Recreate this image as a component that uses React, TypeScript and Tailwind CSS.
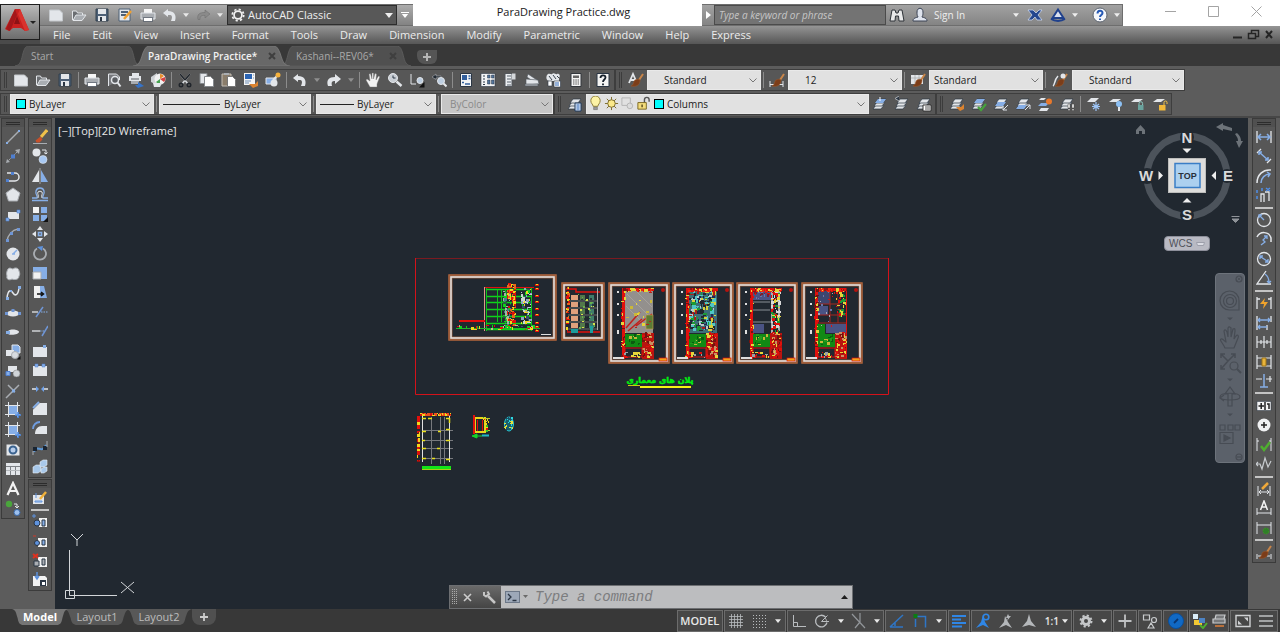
import type { ReactNode } from "react";

// Palette shared by the small toolbar drawings
const L = "#e3e6ea";
const G = "#a9adb2";
const B = "#86aee6";
const D = "#2b3644";
const O = "#dd8430";

const page = <path d="M1.500 3h10l3 3v8h-13z" fill={L} stroke="#c4c8cc" />;
const brush = (
  <g>
    <path d="m15 2-4 6" stroke="#c98548" strokeWidth="2" />
    <path d="M12 8c0 6-5 7-9 6 3-1 2-4 4-6 2-1 4-1 5 0z" fill="#7c3d19" stroke="#9a5526" strokeWidth=".6" />
  </g>
);
const stack = (
  <g fill={L} stroke={D} strokeWidth=".7">
    <path d="M4 9h8l-3 4H1z" />
    <path d="M5 6h8l-3 4H2z" />
    <path d="M6 3h8l-3 4H3z" />
  </g>
);
const dimBase = <path d="M2 5v10M14 5v10M3 11h10M5 9l-2 2 2 2M11 9l2 2-2 2" stroke={L} />;

const ICONS: Record<string, ReactNode> = {
  new: page,
  open: (
    <g stroke={L}>
      <path d="M1.500 13V4h4l1 2h5v2" fill="#6b6e72" />
      <path d="M2 13.500 5 8h10l-4 5.500z" fill={G} />
    </g>
  ),
  save: (
    <g>
      <path d="M2 2h12v12H2z" fill="#4d6077" stroke="#33404f" />
      <path d="M4 2h8v5H4zM4 9h8v5H4z" fill={L} />
      <path d="M6 10h2v4H6z" fill={D} />
    </g>
  ),
  saveas: (
    <g>
      <path d="M2 2h11v12H2z" fill={L} stroke="#4d6077" />
      <path d="M4 5h7M4 8h5" stroke="#4d6077" strokeWidth="2" />
      <path d="m7 12 7-8" stroke="#f0a030" strokeWidth="2.500" />
    </g>
  ),
  print: (
    <g>
      <path d="M4 2h8v5H4z" fill="#f6f6f6" />
      <path d="M1 6h14v6H1z" fill={G} stroke={L} />
      <path d="M3.500 10.500h9v4h-9z" fill="#fff" stroke={D} strokeWidth=".6" />
    </g>
  ),
  preview: (
    <g>
      <path d="M2.500 14V2h8l3 3v3" stroke={L} fill="#77797d" />
      <circle cx="9" cy="8" r="3.500" fill="#5a5d61" stroke={L} strokeWidth="1.500" />
      <path d="m11.500 10.500 3 4" stroke={L} strokeWidth="2" />
    </g>
  ),
  publish: (
    <g>
      <path d="M4 1h7v4H4zM1 4h12v5H1z" fill={L} />
      <path d="M3 9h8v3H3z" fill={G} />
      <path d="M3 7h8" stroke="#5c6064" />
      <path d="M7 13h3v-3l6 4-6 2z" fill="#3673c8" />
    </g>
  ),
  print3d: (
    <g>
      <path d="m1 5 6-4v12l-6-3z" fill="#d0d3d6" />
      <circle cx="10" cy="7" r="5.500" fill="#f2f2f2" />
      <path d="M10 7V2a5 5 0 0 1 4 2z" fill="#e88d2d" />
      <path d="m10 7 5-2a5 5 0 0 1-1 5z" fill="#d64343" />
      <path d="M10 7v5a5 5 0 0 1-4-2z" fill="#45a150" />
      <path d="M3 11h9l-2 4H4z" fill={L} />
    </g>
  ),
  cut: (
    <g stroke="#20252b" strokeWidth="1.600">
      <path d="m3 2 8 10M13 2 5 12" stroke="#d5d8db" />
      <path d="m3 2 5 6M13 2 8 8" />
      <circle cx="4" cy="13" r="1.700" />
      <circle cx="12" cy="13" r="1.700" />
    </g>
  ),
  copy: (
    <g fill={L} stroke="#85898d">
      <path d="M1 1.500h7v10H1z" />
      <path d="M5.500 4.500h6l3 3v7h-9z" fill="#fff" />
    </g>
  ),
  paste: (
    <g>
      <path d="M1 2h9v12H1z" fill="#8a7d6b" stroke="#c3bdb3" />
      <path d="M3 1h5v2H3z" fill={G} />
      <path d="M6.500 4.500h5l3 3v7h-8z" fill="#fff" stroke="#777" />
    </g>
  ),
  match: (
    <g>
      <path d="M1 1h11v12H1z" fill="#f4f4f4" />
      <path d="M2 2h7v5H2z" fill="#2c65b4" />
      <path d="M10 3h1M10 6h1M2 9h6M2 11h4" stroke="#6e8fb7" />
      <path d="M6 12h6l3-3v5l-5 2z" fill={O} />
    </g>
  ),
  blockedit: (
    <g>
      <path d="M1 6h10v6H1z" fill={B} stroke={L} />
      <circle cx="9" cy="11" r="3.500" fill={L} />
      <path d="m8 8 5-5" stroke={L} strokeWidth="2" />
      <circle cx="13" cy="3" r="2.500" fill="#f5b13c" />
    </g>
  ),
  undo: <path d="M6 2 1 6l5 4V8c4-.5 5 1 3 6h4c2-6-1-10-7-10z" fill={L} />,
  redo: <path d="m9 2 6 5-6 5V9c-3 0-4 1-3 5H2C0 8 3 5 9 5z" fill={L} />,
  redoDim: <path d="m10 3 5 4-5 4V8.500c-4-.5-5 1-5 4H3c-1-5 1-7 7-7z" fill="#8a8a8a" stroke="#6a6a6a" strokeWidth=".5" />,
  pan: <path d="M5 15 1 8l1-1 3 2-1-7 1.500-.3L7 7V1h1.500v6L10 1.500l1.500.5L11 8l2.500-4 1.300.7L12 12v3z" fill="#f3f3f3" stroke="#777" strokeWidth=".4" />,
  zoom: (
    <g>
      <circle cx="6" cy="6" r="4.500" fill="#c9ced4" stroke={L} />
      <path d="M6 3.500V6h2.500" stroke={D} />
      <path d="m9.500 9.500 5 4.500" stroke={L} strokeWidth="2.500" />
    </g>
  ),
  zoomwin: (
    <g>
      <path d="M2 2v10h5" stroke={L} />
      <circle cx="11" cy="8.500" r="3" fill="#bccde0" stroke={L} />
      <path d="M15.500 10v5.500H10z" fill="#111" />
    </g>
  ),
  zoomprev: (
    <g>
      <path d="M5 2 1 5l4 2.500V6c4-1 5 0 5 1V4H5z" fill="#222a33" stroke={G} strokeWidth=".6" />
      <circle cx="10" cy="9" r="3.500" fill="#bccde0" stroke={L} />
      <path d="m12.500 11.500 3 3" stroke={L} strokeWidth="2" />
    </g>
  ),
  props: (
    <g>
      <path d="M2.500 1.500h11v13h-11z" fill="#f2f4f6" stroke={D} />
      <path d="M4 3h5v5H4z" fill="#325f9d" />
      <path d="M10.500 4h2M10.500 6.500h2M4 10.500h2M7 12h5" stroke="#325f9d" strokeWidth="1.500" />
    </g>
  ),
  dc: (
    <g>
      <path d="M1 1.500h14v13H1z" fill="#f2f4f6" stroke={D} strokeWidth=".6" />
      <path d="M3 4h2M3 7h2M3 10h2M3 12.500h2" stroke={D} />
      <path d="M7.500 3h2.500v3H7.500zM11.500 3H14v3h-2.500zM7.500 8h2.500v4H7.500zM11.500 8H14v4h-2.500z" fill="#54779f" stroke={D} strokeWidth=".5" />
    </g>
  ),
  palettes: (
    <g>
      <path d="M3 1.500h7v13H3z" fill="#eceff2" stroke="#55595e" />
      <path d="M10 1.500h3.500v6H10z" fill="#d4d7da" />
      <path d="M5 4h4M5 7h4M5 10h4M5 13h4" stroke="#8a929b" strokeWidth="1.300" />
    </g>
  ),
  sheets: (
    <g fill={L} stroke="#4e545a" strokeWidth=".6">
      <path d="m4 2 9 6-2 3-8-6z" />
      <path d="m2 7 12 1 1 4-13 1z" />
      <path d="M1 12h13v2H1z" fill={G} />
    </g>
  ),
  markup: (
    <g>
      <path d="M1 3c2-3 4 0 5-1 2-2 4 1 5 0 2-1 4 2 2 4v3H3C0 8 0 5 1 3z" fill={L} />
      <path d="m3 4 3 4M7 3l3 4M11 4l2 2" stroke="#39424c" />
      <path d="M2 9h4v5H2zM8 9h6.500v6H8z" fill="#fff" stroke={D} strokeWidth=".6" />
      <path d="M9 11h4M9 13h4" stroke="#2c65b4" />
    </g>
  ),
  calc: (
    <g>
      <path d="M3 1.500h10v13H3z" fill="#f4f4f4" stroke="#33373c" />
      <path d="M5 3.500h6v2.500H5z" fill="#666" />
      <path d="M5 8h6M5 10h6M5 12h6" stroke="#555" strokeDasharray="1.500 .8" />
    </g>
  ),
  help: (
    <g>
      <path d="M2 1.500h12v13H2z" fill="#f4f4f4" stroke={D} />
      <path d="M5.500 6c0-3.500 5-3.500 5-.5C10.500 7.500 8 7.500 8 10M8 11.500v1.800" stroke="#16202c" strokeWidth="1.800" />
    </g>
  ),
  textstyle: (
    <g>
      <path d="M1 11 5 2l4 9M3 8h4.500" stroke={L} strokeWidth="1.800" />
      {brush}
    </g>
  ),
  dimstyle: (
    <g>
      <path d="M1 9v6M14 9v6M1 12.500h13" stroke={L} />
      {brush}
    </g>
  ),
  tablestyle: (
    <g>
      <path d="M1 3h12v9H1z" fill={L} />
      <path d="M1 6h12M5 3v9M9 3v9" stroke="#a0a4a8" strokeWidth=".7" />
      {brush}
    </g>
  ),
  mlstyle: (
    <g>
      <path d="M1 14c2-1 1-6 5-10" stroke={L} strokeWidth="1.500" />
      {brush}
      <circle cx="11" cy="4" r="2.500" fill={L} />
    </g>
  ),
  layers: (
    <g>
      {stack}
      <path d="M8 7h6v8H8z" fill="#d9e6f7" stroke="#1e3a5f" />
      <path d="M9.500 9h3M9.500 11h3M9.500 13h3" stroke="#2c65b4" />
    </g>
  ),
  bulb: (
    <g>
      <path d="M5.500 11c0-2-2.500-3-2.500-6a5 5 0 0 1 10 0c0 3-2.500 4-2.500 6z" fill="#fdf3a6" stroke="#8a7a33" />
      <path d="M6 12h4v2.500H6z" fill="#9a9a9a" stroke="#555" strokeWidth=".5" />
    </g>
  ),
  sun: (
    <g stroke="#7a6a2a">
      <path d="M8 1v14M1 8h14M3 3l10 10M13 3 3 13" />
      <circle cx="8" cy="8" r="4" fill="#fbe98a" />
    </g>
  ),
  vpfreeze: (
    <g stroke="#b3b3b3">
      <path d="M2 2h9v8H2z" />
      <circle cx="10.500" cy="10.500" r="3" fill="#dcdcdc" />
    </g>
  ),
  unlock: (
    <g>
      <path d="M9 7V4a2.500 2.500 0 0 1 5 0v2" stroke="#555" strokeWidth="1.500" />
      <path d="M2 7h9v7H2z" fill="#f3dc7c" stroke="#7b6620" />
      <path d="M6.500 9v3" stroke="#55471a" strokeWidth="1.500" />
    </g>
  ),
  layCur: (
    <g>
      {stack}
      <path d="M6 3h8l-3 4H3z" fill={B} />
      <path d="M8 1v4" stroke="#fff" />
    </g>
  ),
  layPrev: (
    <g>
      {stack}
      <path d="M5 0 1 2.500 5 5" fill={D} stroke={G} />
    </g>
  ),
  layState: (
    <g>
      {stack}
      <path d="M7 9h8v6H7z" fill="#fff" stroke="#333" />
      <path d="M9 11h5M9 13h5" stroke="#555" />
    </g>
  ),
  layMatch: (
    <g>
      {stack}
      <path d="M7 11h5l3-3v5l-4 2z" fill={O} />
    </g>
  ),
  layCheck: (
    <g>
      {stack}
      <path d="M6 3h8l-3 4H3z" fill={B} />
      <path d="m7 11 3 3 5-6" stroke="#45a13c" strokeWidth="2.200" />
    </g>
  ),
  layIn: (
    <g>
      {stack}
      <path d="M5 6h8l-3 4H2z" fill={B} />
      <path d="m15 9-5 5m0-4v4h4" stroke="#dfe4ea" />
    </g>
  ),
  layOut: (
    <g>
      {stack}
      <path d="M4 9h8l-3 4H1z" fill={B} />
      <path d="m10 14 5-5m-4 0h4v4" stroke="#dfe4ea" />
    </g>
  ),
  layIso: (
    <g>
      <path d="M4 2h5L7 4H2zM4 12h8l-2 3H2z" fill={L} />
      <path d="M4 7h8l-3 3H1z" fill={B} />
      <circle cx="12" cy="5.500" r="3" fill="#e8782c" />
    </g>
  ),
  layWalk: (
    <g>
      {stack}
      <path d="M9 8h2v4H9zM13 8h2v4h-2zM9 13h2v1.500H9zM13 13h2v1.500h-2z" fill="#fff" stroke="#444" strokeWidth=".5" />
    </g>
  ),
  layFrz: (
    <g>
      <path d="M5 2h8l-4 4H1z" fill={L} />
      <path d="M10 6v9M6 10.500h8M7 8l6 5M13 8l-6 5" stroke="#9cc4f5" strokeWidth="1.200" />
    </g>
  ),
  layOff: (
    <g>
      <path d="M5 3h8l-4 3H1z" fill={L} />
      <circle cx="11" cy="8" r="3" fill="#8cc0f4" />
      <path d="M11 11v4" stroke={L} strokeWidth="2" />
    </g>
  ),
  layLock: (
    <g>
      <path d="M5 3h8l-4 3H1z" fill={L} />
      <path d="M9 9V7.500a1.800 1.800 0 0 1 3.600 0V9" stroke="#8fc7c0" />
      <path d="M8 9h5.500v5H8z" fill="#6aa39e" />
    </g>
  ),
  layUnlock: (
    <g>
      <path d="M5 3h8l-4 3H1z" fill={L} />
      <path d="M12 9V6.500a1.500 1.500 0 0 1 3 0V8" stroke="#f0c24a" />
      <path d="M7 9h6.500v5.500H7z" fill="#f0b83a" />
    </g>
  ),

  // Draw toolbar
  line: (
    <g>
      <path d="M2 14 14 2" stroke={G} strokeWidth="1.500" />
      <path d="M1 13h2v2H1zM13 1h2v2h-2z" fill={B} />
    </g>
  ),
  xline: (
    <g>
      <path d="m2 14 12-12" stroke={G} strokeDasharray="2 1" />
      <path d="m15 1-1 5-4-4zM1 15l1-4 3 3z" fill={G} />
      <path d="M6 6.500h4v4H6z" fill="#4f7fd0" />
    </g>
  ),
  pline: (
    <g>
      <path d="M2 5h8a4 4 0 0 1 0 8H3" stroke={L} strokeWidth="1.500" />
      <path d="M1 11h3v3H1zM6 4h3v3H6z" fill="#4f7fd0" />
    </g>
  ),
  polygon: <path d="m8 1 7 5-2.500 8h-9L1 6z" fill={L} stroke={G} />,
  rect: (
    <g>
      <path d="M3 5h11v7H3z" fill={L} />
      <path d="M1 11h3v3H1zM12 3h3v3h-3z" fill={B} stroke="#4f7fd0" strokeWidth=".6" />
    </g>
  ),
  arc: (
    <g>
      <path d="M2 14C3 8 7 3 13 2" stroke={G} strokeWidth="1.500" />
      <path d="M1 12h3v3H1zM5 5h3v3H5zM12 1h3v3h-3z" fill="#6f95d4" />
    </g>
  ),
  circle: (
    <g>
      <circle cx="8" cy="8" r="6.500" fill={L} />
      <path d="m8 8 4-4M7 8h3" stroke={B} strokeWidth="1.500" />
    </g>
  ),
  cloud: <path d="M3 3c2-2 4 0 5 0 2-2 6-1 6 2 1 2 1 4 0 5 0 4-5 4-7 3-3 2-6 0-5-3-1-3 0-5 1-7z" fill={L} stroke={G} />,
  spline: (
    <g>
      <path d="M2 13c1-9 4-8 6-5s5 3 6-5" stroke={L} strokeWidth="1.500" />
      <path d="M1 12h3v3H1zM13 1h3v3h-3zM5 5h2v2H5z" fill={B} />
    </g>
  ),
  ellipse: (
    <g>
      <ellipse cx="8" cy="8.500" rx="6.500" ry="3" fill={L} />
      <path d="M0 7h3v3H0zM13 7h3v3h-3zM6.500 4h3v3h-3z" fill="#6f95d4" />
    </g>
  ),
  ellarc: (
    <g>
      <path d="M3 7c4-3 11-1 11 1s-7 4-11 2z" fill={L} />
      <path d="M1 7h4v3H1z" fill={B} />
    </g>
  ),
  insert: (
    <g>
      <path d="M7 1h6l2 2v6H7z" fill={B} stroke={L} />
      <path d="M1 6h8v6H1z" fill={L} />
      <circle cx="10" cy="11" r="3.500" fill="#d7dbe0" stroke={G} />
      <path d="M15.500 12v3.500H12z" fill="#111" />
    </g>
  ),
  block: (
    <g>
      <path d="M3 3h9v6H3z" fill={L} />
      <circle cx="11.500" cy="10.500" r="3.500" fill="#cfd3d7" stroke="#777" strokeWidth=".5" />
      <path d="M1 8.500h4v4H1z" fill={B} stroke="#4f7fd0" />
    </g>
  ),
  point: (
    <g>
      <path d="M1 15 14 2M3 2l7 7" stroke={G} strokeWidth="1.500" />
      <path d="M7 6.500h3v3H7z" fill={B} />
    </g>
  ),
  hatch: (
    <g>
      <path d="M4 4h8v8H4z" fill={B} />
      <path d="M3.500 0v15M12.500 0v15M0 3.500h15M0 12.500h15" stroke={L} />
      <path d="M13 10v6M10 13h6" stroke="#4f8ee8" strokeWidth="1.500" />
    </g>
  ),
  region: (
    <g>
      <path d="M1.500 2.500h10l3 3v8h-13z" fill={L} />
      <circle cx="8" cy="8" r="3.500" fill="#b7cdeb" stroke="#3a628f" strokeWidth="2" />
    </g>
  ),
  table: (
    <g>
      <path d="M1 2h14v12H1z" fill={L} />
      <path d="M1 5.500h14M5.500 5v9M10.500 5v9" stroke="#7d8186" />
      <path d="M1 9.500h14" stroke="#b4b8bc" />
    </g>
  ),
  mtext: <path d="M2.500 14 8 2l5.500 12M4.500 10h7" stroke="#f3f3f3" strokeWidth="2.200" />,
  addsel: (
    <g>
      <circle cx="4" cy="4" r="3.200" fill="#4aa53c" />
      <path d="M9 4h3v4m-2-2 2 2 2-2" stroke={L} />
      <circle cx="12" cy="12.500" r="3" fill="#9cc0ee" stroke="#3968a8" />
    </g>
  ),

  // Modify toolbar
  erase: (
    <g>
      <path d="m15 1-6 7" stroke="#f0c14a" strokeWidth="3" />
      <path d="m8.500 7.500-5 4 1 2 3 0 3-3z" fill="#c7502a" />
      <path d="M1 14.500h14" stroke={G} />
    </g>
  ),
  copyobj: (
    <g>
      <circle cx="4.500" cy="4.500" r="4" fill={L} />
      <circle cx="11" cy="11.500" r="4" fill="#a8c8f2" stroke={L} strokeWidth=".6" />
      <path d="M10 2h4v4m-2-1.500 2 1.500 1.500-1.500" stroke={L} />
    </g>
  ),
  mirror: (
    <g>
      <path d="M7 2v12H0z" fill={L} />
      <path d="M9 2v12h7z" fill={B} />
      <path d="M8 0v16" stroke="#d4d7da" strokeWidth=".6" />
    </g>
  ),
  offset: (
    <g>
      <path d="M0 13.500h16M0 11h5c1-3-2-3-1-7 1-4 7-4 8 0 1 4-2 4-1 7h5" stroke={B} strokeWidth="1.300" />
      <path d="M6 11c1-3-1-4 0-6 1-1 3-1 4 0 1 2-1 3 0 6" stroke={L} />
    </g>
  ),
  array: (
    <g>
      <path d="M1 1h6v6H1z" fill="#f3f3f3" />
      <path d="M9 1h6v6H9zM1 9h6v6H1zM9 9h6v6H9z" fill={B} />
      <path d="M16 11v5h-5z" fill="#111" />
    </g>
  ),
  move: (
    <g>
      <path d="m8 0 3 4H5zM8 16l3-4H5zM0 8l4-3v6zM16 8l-4-3v6z" fill={L} />
      <path d="M6.500 6.500h3v3h-3z" stroke={B} strokeWidth="1.500" />
    </g>
  ),
  rotate: (
    <g>
      <path d="M5 3.500a6 6 0 1 0 6 0" stroke={G} strokeWidth="1.800" />
      <path d="m5 2 6-1-1 5z" fill="#5e92dd" />
    </g>
  ),
  scale: (
    <g>
      <path d="M1 2h14v12H1z" fill={B} />
      <path d="M1 7h8v7H1z" fill="#f1f1f1" stroke={G} />
    </g>
  ),
  stretch: (
    <g>
      <path d="M2 2h6v12H2z" fill="#f1f1f1" />
      <path d="M8 2h4l3 12H8z" fill={B} />
      <path d="M5 10h6M9 8l2.500 2L9 12" stroke="#111" strokeWidth="1.500" />
    </g>
  ),
  trim: (
    <g>
      <path d="M0 8h6" stroke={L} strokeWidth="1.300" />
      <path d="M9 8h7" stroke={B} strokeDasharray="1.500 1" />
      <path d="m4 13 7-10" stroke="#6f95d4" strokeWidth="1.500" />
    </g>
  ),
  extend: (
    <g>
      <path d="M0 8h8" stroke={L} strokeWidth="1.300" />
      <path d="M8 8h4" stroke={B} strokeDasharray="1.500 1" />
      <path d="m10 13 6-10" stroke="#6f95d4" strokeWidth="1.500" />
    </g>
  ),
  breakpt: (
    <g>
      <path d="M1 4h14v10H1z" fill={L} />
      <path d="M11 2h3v3h-3z" fill={B} />
    </g>
  ),
  breakobj: (
    <g>
      <path d="M1 4h14v10H1z" fill={L} />
      <path d="M3 2h3v3H3zM10 2h3v3h-3z" fill={B} stroke="#4f7fd0" strokeWidth=".5" />
    </g>
  ),
  join: (
    <g>
      <path d="M0 8h6M10 8h6" stroke={L} strokeWidth="1.300" />
      <path d="m4 5 3 3-3 3zM12 5 9 8l3 3z" fill="#6fa1ea" />
    </g>
  ),
  chamfer: (
    <g>
      <path d="m1 14V9l7-7h7v12z" fill={L} />
      <path d="M1 14V9l7-7h7v12z" fill={L} />
      <path d="m1 7 6-6" stroke={B} strokeWidth="2" />
    </g>
  ),
  fillet: (
    <g>
      <path d="M3 14c0-5 3-8 7-8h5v8z" fill={L} />
      <path d="M1 9c0-4 3-7 7-7" stroke="#6f9ce0" strokeWidth="1.800" />
    </g>
  ),
  blend: (
    <g>
      <path d="M2 12c3-9 7 3 12-7" stroke="#5c97d6" strokeWidth="2" />
      <path d="M1 7h4v4H1zM11 6h4v4h-4z" fill="#1a2431" />
      <path d="M15 1v6M1 11v4" stroke={G} />
    </g>
  ),
  explode: (
    <g fill="#a8c8ea" stroke="#e9eef3" strokeWidth=".6">
      <path d="m1 8 3-2h5v6l-3 2H1z" />
      <path d="m8 3 3-2h4v5l-3 2H8z" />
      <path d="m9 10 3-2h3v4l-3 2H9z" />
    </g>
  ),
  refedit: (
    <g>
      <path d="M1 5h11v9H1z" fill={L} />
      <path d="M3 11h7v1H3zM4 3v5" stroke="#5e92dd" />
      <path d="m8 9 6-7" stroke="#f0b13a" strokeWidth="2.500" />
    </g>
  ),
  refadd: (
    <g>
      <path d="M7 4h8v9H7z" fill="#f3f3f3" />
      <circle cx="5" cy="9" r="3" fill="#5e92dd" stroke={D} />
      <path d="M10 6h3v6h-3z" fill={B} stroke={D} />
      <path d="M2 0v4M0 2h4" stroke="#5e92dd" />
    </g>
  ),
  refrem: (
    <g>
      <path d="M6 4h9v9H6z" fill="#f3f3f3" />
      <circle cx="5" cy="9" r="2.500" fill="#5e92dd" stroke={D} />
      <path d="M10 6h3v5h-3z" fill={B} stroke={D} />
      <path d="M1 2h3" stroke="#d23a2b" />
    </g>
  ),
  refclose: (
    <g>
      <path d="M6 4h9v10H6z" fill="#f3f3f3" />
      <path d="M2 8h5v5H2z" fill={G} stroke={D} />
      <path d="M10 6h3v6h-3z" fill={G} stroke={D} />
      <path d="m1 1 5 4M6 1 1 5" stroke="#e0301e" strokeWidth="2" />
    </g>
  ),
  refsave: (
    <g>
      <path d="M1 4h12l2 2v8H1z" fill="#f3f3f3" />
      <path d="M8 8h6v6H8z" fill={D} />
      <path d="M10 10h3v3h-3z" fill="#fff" />
      <path d="M5 0v6M3 4l2 3 2-3" stroke="#5e92dd" strokeWidth="1.500" />
    </g>
  ),

  // Dimension toolbar
  dlin: (
    <g>
      <path d="M1 2v12M15 2v12" stroke={L} strokeWidth="1.300" />
      <path d="M2 8h12M5 5 2 8l3 3M11 5l3 3-3 3" stroke={B} strokeWidth="1.500" />
    </g>
  ),
  dali: (
    <g>
      <path d="M1 5l4-4M11 15l4-4" stroke={L} strokeWidth="1.300" />
      <path d="m3 4 9 8M3 7V4h3M12 9v3H9" stroke={B} strokeWidth="1.500" />
    </g>
  ),
  darc: (
    <g>
      <path d="M1 15C1 7 7 1 15 2" stroke={L} strokeWidth="1.500" />
      <path d="M5 15c0-5 4-9 9-9M11 4l3 2-2 3" stroke={B} strokeWidth="1.500" />
    </g>
  ),
  dord: (
    <g>
      <path d="M5 15V7h3v8M9 5h4v9" stroke={L} strokeWidth="1.300" />
      <path d="M1 3v3M1 9v3M6 1v3M10 4l4-3M10 1l4 3" stroke="#4f8ee8" strokeWidth="1.500" />
    </g>
  ),
  drad: (
    <g>
      <circle cx="8" cy="8" r="6.500" stroke={L} strokeWidth="1.300" />
      <path d="m8 8-5-5M3 6V3h3" stroke={B} strokeWidth="1.300" />
    </g>
  ),
  djog: (
    <g>
      <path d="M1 6c3-6 12-6 14 1v4" stroke={L} strokeWidth="1.500" />
      <path d="m5 14 4-3-2-2 4-4M8 5h3v3" stroke={B} strokeWidth="1.300" />
    </g>
  ),
  ddia: (
    <g>
      <circle cx="8" cy="8" r="6.500" stroke={L} strokeWidth="1.300" />
      <path d="m3.500 5 9 6M4 8V5h3M12 8v3H9" stroke={B} strokeWidth="1.300" />
    </g>
  ),
  dang: (
    <g>
      <path d="M10 1 1 14h14" stroke={L} strokeWidth="1.300" />
      <path d="M9 4c3 2 4 5 4 9M11 11l2 2 2-2" stroke={B} strokeWidth="1.300" />
    </g>
  ),
  dquick: (
    <g>
      <path d="M1 2v12M15 2v12M1 4h3M12 4h3" stroke={L} strokeWidth="1.300" />
      <path d="M9 3 4 9h4l-1 5 5-7H8z" fill="#f0a32c" />
    </g>
  ),
  dbase: (
    <g>
      <path d="M1 1v14M11 10v5M15 1v6" stroke={L} strokeWidth="1.300" />
      <path d="M2 5h12M2 12h9M4 3 2 5l2 2M12 3l2 2-2 2M4 10l-2 2 2 2" stroke={B} strokeWidth="1.300" />
    </g>
  ),
  dcont: <path d="M1 2v12M8 2v12M15 2v12M1 8h14M5 6v4M11 6v4" stroke={L} strokeWidth="1.200" />,
  dspace: (
    <g>
      <path d="M1 1v14M15 1v14M1 4h14M1 12h14" stroke={L} strokeWidth="1.200" />
      <path d="M6 4h4v8H6z" fill="#e9b43a" stroke="#9b7218" />
    </g>
  ),
  dbreak: (
    <g>
      <path d="M0 6h6M10 6h6M14 3v6" stroke={L} strokeWidth="1.200" />
      <path d="M8 1v13M4 14h8" stroke={B} strokeWidth="1.500" />
    </g>
  ),
  dtol: (
    <g>
      <path d="M1 3.500h14v9H1z" fill="#f4f4f4" stroke={D} strokeWidth=".5" />
      <path d="M9 4v8M2.500 8H8M5.200 5v6M11 6h2v5" stroke="#222" strokeWidth="1.500" />
    </g>
  ),
  dcenter: (
    <g>
      <circle cx="8" cy="8" r="6.500" fill="#f0f1f2" />
      <path d="M8 5v6M5 8h6" stroke="#222" strokeWidth="1.500" />
    </g>
  ),
  dinsp: (
    <g>
      <path d="M1 1v13M15 1v13M1 4h2M13 4h2" stroke={L} />
      <path d="m5 9 3 4 6-8" stroke="#4fae2f" strokeWidth="2.500" />
    </g>
  ),
  djogl: <path d="M0 8h4l2 5L9 2l3 9 3-6M2 6 0 8l2 2" stroke="#c8ccd0" strokeWidth="1.200" />,
  dedit: (
    <g>
      {dimBase}
      <path d="m6 8 6-6" stroke="#f0a93a" strokeWidth="2.500" />
    </g>
  ),
  dtedit: (
    <g>
      <path d="M1 8v7M15 8v7M1 13h14" stroke={L} />
      <path d="m4.500 10 3.500-9 3.500 9M6 7h4" stroke="#f4f4f4" strokeWidth="1.500" />
    </g>
  ),
  dupd: (
    <g>
      <path d="M1 2v12M15 2v12M1 5h14" stroke={L} />
      <circle cx="10" cy="11" r="3" fill="#2f7f28" stroke="#3f8f28" strokeDasharray="2 1" />
    </g>
  ),
  dstyle: (
    <g>
      <path d="M1 10v5M15 10v5M2 12h4M11 12h3" stroke={L} />
      {brush}
    </g>
  ),

  // Status bar
  grid: <path d="M3.500 1v14M6.500 1v14M9.500 1v14M12.500 1v14M1 3.500h14M1 6.500h14M1 9.500h14M1 12.500h14" stroke="#b9bcbf" strokeWidth=".8" />,
  snap: <path d="M2 2.500h13M2 5.500h13M2 8.500h13M2 11.500h13M2 14.500h13" stroke="#b9bcbf" strokeDasharray="1 2" />,
  ortho: <path d="M2.500 2v11.500H15M2.500 9.500h4v4" stroke="#b9bcbf" />,
  polar: (
    <g stroke="#b9bcbf">
      <path d="M11.500 4A5.800 5.800 0 1 0 13 9.500" strokeWidth="1.300" />
      <path d="M7.500 8.500H15M7.500 8.500l6-6M11 5c1 1 1.500 2 1.500 3.500" />
    </g>
  ),
  iso: <path d="m1 1 13 14M9 0v9M9 9l-5 6" stroke="#92969a" strokeWidth="1.200" />,
  otrack: <path d="M1 14 14 2M1 14h13M6 9v4" stroke="#2f76c6" strokeWidth="1.500" />,
  osnap: (
    <g>
      <path d="M3.500 3.500h10v11M3.500 6v8" stroke="#2f76c6" strokeWidth="1.500" />
      <path d="M1.500 1h4v4h-4z" fill="#0b7d12" />
    </g>
  ),
  lwt: <path d="M1 3h14M1 6.500h9M1 10h14M1 13.500h10" stroke="#2f86e6" strokeWidth="2.200" />,
  annoOn: (
    <g>
      <path d="M8 2 6 9l-5 6 7-3 6 3-4-6z" fill="#2f86e6" />
      <circle cx="11" cy="4" r="2.800" stroke="#2f86e6" strokeWidth="1.600" />
    </g>
  ),
  annoAuto: (
    <g fill="#b4b7ba">
      <path d="M7 3 6 9l-5 6 7-3 6 3-4-6z" />
      <path d="m10 1-2 4h2l-1 3 4-5h-2z" />
    </g>
  ),
  anno: <path d="M8 1 6 8l-5 6 7-2 7 2-5-6z" fill="#b4b7ba" />,
  gear: (
    <g>
      <circle cx="8" cy="8" r="3.500" stroke="#c4c6c8" strokeWidth="3" />
      <circle cx="8" cy="8" r="5.500" stroke="#c4c6c8" strokeWidth="2" strokeDasharray="2.200 2.120" />
    </g>
  ),
  gearLine: (
    <g>
      <circle cx="8" cy="8" r="4.500" stroke="#f0f0f0" strokeWidth="2" />
      <circle cx="8" cy="8" r="6.500" stroke="#f0f0f0" strokeWidth="2" strokeDasharray="2.500 2.600" />
    </g>
  ),
  plus: <path d="M8 1.500v13M1.500 8h13" stroke="#bfc1c3" strokeWidth="1.800" />,
  isolate: (
    <g stroke="#c9ccce" strokeWidth="1.200">
      <path d="M1.500 2h6v5h-6zM6 15l3-5 3 5z" />
      <circle cx="12" cy="7" r="2.500" />
    </g>
  ),
  hw: (
    <g>
      <circle cx="8" cy="8" r="7.500" fill="#1169c4" stroke="#0b4f9b" />
      <path d="m6 10 4-4" stroke="#0a3670" strokeWidth="1.800" />
    </g>
  ),
  trust: (
    <g>
      <path d="M1 1h5v5H1z" fill="#d9ecf7" />
      <path d="M2 7h8v5H2z" fill="#f3c934" />
      <path d="M7 5h6v5H7z" fill="#4d83c4" />
      <path d="m8 12 3 3 4-5" stroke="#4fae2f" strokeWidth="2" />
    </g>
  ),
  plotter: (
    <g>
      <path d="M5 2h9l-1 4H4zM2 6h12v4H2z" fill="#77797b" stroke="#c9cbcd" strokeWidth="1.200" />
      <path d="M4 13h9" stroke="#b8703b" strokeWidth="2" />
    </g>
  ),
  clean: (
    <g>
      <path d="M1 2.500h14v11H1z" stroke="#d0d2d4" strokeWidth="1.400" />
      <path d="M9 4.500h4v4zM3 11.500v-4l4 4z" fill="#d0d2d4" />
    </g>
  ),
  menu: <path d="M1 3h14M1 8h14M1 13h14" stroke="#c0c2c4" strokeWidth="1.600" />,

  // Info centre
  binoc: <path d="M3 3h3l1 3h2l1-3h3l2 11h-5l-.5-5h-3L6 14H1z" fill="#e9e9e9" stroke="#2e3338" />,
  user: <path d="M5 5c0-5 6-5 6 0s-1 4-1 5c4 1 5 2 5 4H1c0-2 1-3 5-4 0-1-1 0-1-5z" fill="#dfe4ee" stroke="#3a4254" />,
  exchange: <path d="M1 3h5l3 3 3-3h3l-4 5 4 5h-5l-2-3-3 3H1l4-5z" fill="#24478f" stroke="#c9d6ee" strokeWidth=".8" />,
  a360: (
    <g stroke="#20418c">
      <path d="M8 2.500 2.500 11h11z" strokeWidth="2" fill="#d9e0ef" />
      <path d="M1 12c4 2.500 10 2.500 14 0" strokeWidth="2" />
    </g>
  ),
  helpRound: (
    <g>
      <circle cx="8" cy="8" r="7" fill="#f5f7fb" stroke="#5d6570" />
      <path d="M5.500 6.500c0-3.500 5-3.500 5-.5C10.500 8 8 8 8 10M8 11.500v1.500" stroke="#2458b5" strokeWidth="2" />
    </g>
  ),
};

function Icon({ name, className = "h-4 w-4" }: { name: string; className?: string }) {
  return (
    <svg viewBox="0 0 16 16" fill="none" className={`shrink-0 ${className}`} aria-hidden="true">
      {ICONS[name]}
    </svg>
  );
}

function Tool({ name, className = "h-5 w-[22px]" }: { name: string; className?: string }) {
  return (
    <button type="button" aria-label={name} className={`flex shrink-0 items-center justify-center ${className}`}>
      <Icon name={name} />
    </button>
  );
}

function Caret({ className = "w-3" }: { className?: string }) {
  return (
    <button type="button" aria-label="More" className={`flex h-4 shrink-0 items-center justify-center ${className}`}>
      <svg viewBox="0 0 8 5" className="h-1 w-1.5 fill-current" aria-hidden="true">
        <path d="M0 0h8L4 5z" />
      </svg>
    </button>
  );
}

const Sep = () => (
  <div className="flex w-[5px] shrink-0 justify-center">
    <div className="h-4 w-px bg-[#8c8c8c]" />
  </div>
);

const Grip = () => (
  <div className="flex h-5 w-[9px] shrink-0 items-center justify-center gap-px">
    <div className="h-4 w-px bg-[#3c3c3c]" />
    <div className="h-4 w-px bg-[#3c3c3c]" />
  </div>
);

const VGrip = () => (
  <div className="flex h-2 shrink-0 flex-col items-center justify-center gap-px bg-[#505050]">
    <div className="h-px w-3.5 bg-[#2c2c2c]" />
    <div className="h-px w-3.5 bg-[#2c2c2c]" />
  </div>
);

function Combo({
  label,
  value,
  className,
  disabled = false,
  children,
}: {
  label: string;
  value: string;
  className: string;
  disabled?: boolean;
  children?: ReactNode;
}) {
  return (
    <div className={`relative h-5 shrink-0 ${disabled ? "text-[#8a8a8a]" : "text-[#1c1c1c]"}`}>
      {children}
      <select
        aria-label={label}
        disabled={disabled}
        className={`block h-5 appearance-none border border-[#e9e9e9] text-[10px] leading-4 outline-none ${
          disabled ? "bg-[#c6c6c6]" : "bg-[#e1e1e1]"
        } ${className}`}
      >
        <option>{value}</option>
      </select>
      <svg viewBox="0 0 8 5" className="pointer-events-none absolute top-2 right-1 h-[5px] w-2" fill="none" stroke="#777" aria-hidden="true">
        <path d="m.5.5 3.500 3.500L7.500.5" />
      </svg>
    </div>
  );
}

const MENUS = ["File", "Edit", "View", "Insert", "Format", "Tools", "Draw", "Dimension", "Modify", "Parametric", "Window", "Help", "Express"];

function TitleBar() {
  return (
    <header className="flex bg-white pt-1">
      <div className="w-10 shrink-0 bg-[#4a4a4a]">
        <button
          type="button"
          aria-label="Application menu"
          className="flex h-9 w-10 items-center justify-center border border-[#1d1d1d] bg-linear-to-b from-[#b9b9b9] to-[#6d6d6d]"
        >
          <svg viewBox="0 0 36 34" className="h-[34px] w-9" aria-hidden="true">
            <path d="M13 4h5l9 21-4 1-4-3h-8l-4 3-4-2z" fill="#c8201f" />
            <path d="m13 4 2 6-7 16-4-2z" fill="#a3171a" />
            <path d="m15 11 3 8h-6z" fill="#8c1215" />
            <path d="m18 4 9 21-4 1-7-17z" fill="#d9332e" />
            <path d="M28 16h6l-3 3z" fill="#222" />
          </svg>
        </button>
      </div>
      <div className="flex min-w-0 flex-1 flex-col">
        <div className="flex h-[22px] items-stretch text-[11px]">
          <div className="flex items-center border-y border-[#6e6e6e] bg-linear-to-b from-[#acacac] to-[#838383] pl-1 text-[#e8e8e8]">
            {["new", "open", "save", "saveas", "print"].map((n) => (
              <Tool key={n} name={n} className="h-5 w-[23px]" />
            ))}
            <Tool name="undo" />
            <Caret className="w-2.5" />
            <Tool name="redoDim" className="h-5 w-6" />
            <Caret className="w-2.5" />
            <div className="relative ml-0.5 text-[#eeeeee]">
              <Icon name="gearLine" className="pointer-events-none absolute top-[3px] left-1 h-3.5 w-3.5" />
              <select aria-label="Workspace" className="block h-5 w-[170px] appearance-none border border-[#2d2d2d] bg-[#585858] pl-5 text-[11px] outline-none">
                <option>AutoCAD Classic</option>
              </select>
              <svg viewBox="0 0 8 5" className="pointer-events-none absolute top-2 right-1 h-[5px] w-2 fill-current" aria-hidden="true">
                <path d="M0 0h8L4 5z" />
              </svg>
            </div>
            <button type="button" aria-label="Customize" className="flex h-5 w-4 flex-col items-center justify-center gap-px">
              <span className="h-px w-2 bg-white" />
              <svg viewBox="0 0 8 5" className="h-1 w-2 fill-white" aria-hidden="true">
                <path d="M0 0h8L4 5z" />
              </svg>
            </button>
          </div>
          <h1 className="flex-1 truncate pl-3 text-center leading-4 text-[#1a1a1a]">ParaDrawing Practice.dwg</h1>
          <div className="flex items-center border-y border-r border-[#6e6e6e] bg-linear-to-b from-[#a2a2a2] to-[#848484] text-[#eeeeee]">
            <button type="button" aria-label="Collapse search" className="flex h-5 w-3 items-center justify-center">
              <svg viewBox="0 0 5 8" className="h-2 w-[5px] fill-white" aria-hidden="true">
                <path d="M0 0v8l5-4z" />
              </svg>
            </button>
            <input
              aria-label="Search"
              placeholder="Type a keyword or phrase"
              className="h-5 w-[172px] border border-[#4b4b4b] bg-[#737373] px-1 text-[10px] italic outline-none placeholder:text-[#c6c6c6]"
            />
            <Tool name="binoc" />
            <Tool name="user" className="h-5 w-6" />
            <button type="button" className="w-[76px] pl-0.5 text-left text-[10px]">
              Sign In
            </button>
            <Caret className="w-4" />
            <Tool name="exchange" />
            <Tool name="a360" className="h-5 w-6" />
            <Caret className="w-2.5" />
            <Tool name="helpRound" className="ml-2 h-5 w-6" />
            <Caret className="w-2.5" />
          </div>
          <div className="flex w-[157px] shrink-0 items-center justify-end gap-8 pr-[18px] pb-2 text-[#a4a4a4]">
            <button type="button" aria-label="Minimize">
              <svg viewBox="0 0 11 11" className="h-[11px] w-[11px]" stroke="currentColor" fill="none">
                <path d="M0 5.500h11" />
              </svg>
            </button>
            <button type="button" aria-label="Maximize">
              <svg viewBox="0 0 11 11" className="h-[11px] w-[11px]" stroke="currentColor" fill="none">
                <path d="M.5.5h10v10H.5z" />
              </svg>
            </button>
            <button type="button" aria-label="Close">
              <svg viewBox="0 0 11 11" className="h-[11px] w-[11px]" stroke="currentColor" fill="none">
                <path d="m.5.5 10 10M10.500.5l-10 10" />
              </svg>
            </button>
          </div>
        </div>
        <nav className="flex h-[18px] items-center gap-[22px] bg-linear-to-b from-[#959595] to-[#565656] pr-1.5 pl-[13px] text-[11px] leading-4 text-[#ececec]">
          {MENUS.map((m) => (
            <button key={m} type="button">
              {m}
            </button>
          ))}
          <svg viewBox="0 0 42 12" className="ml-auto h-3 w-[42px]" fill="none" stroke="#252525" strokeWidth="1.500" aria-hidden="true">
            <path d="M1 8.500h9" strokeWidth="2" />
            <path d="M16.500 4.500h7v5h-7zM19.500 4V1.500h7v6h-3" />
            <path d="m34 2 6 7M40 2l-6 7" strokeWidth="2" />
          </svg>
        </nav>
      </div>
    </header>
  );
}

function FileTab({ label, className, active = false, closable = true }: { label: string; className: string; active?: boolean; closable?: boolean }) {
  return (
    <div className={`relative flex h-5 items-center justify-between text-[10px] ${active ? "z-10 text-[#f1f1f1]" : "text-[#a9a9a9]"} ${className}`}>
      <svg viewBox="0 0 140 20" preserveAspectRatio="none" className="absolute inset-0 h-full w-full" aria-hidden="true">
        <path
          d="M0 20C7 19 7 13 9 7c2-6 3-7 8-7h106c5 0 6 1 8 7s2 12 9 13z"
          fill={active ? "#686868" : "#505050"}
          stroke={active ? "#747474" : "#5b5b5b"}
        />
      </svg>
      <button type="button" className={`relative ${active ? "font-semibold" : ""}`}>
        {label}
      </button>
      {closable ? (
        <button type="button" aria-label={`Close ${label}`} className="relative">
          <svg viewBox="0 0 8 8" className="h-2 w-2" stroke="#3f3f3f" strokeWidth="2" aria-hidden="true">
            <path d="m1 1 6 6M7 1 1 7" />
          </svg>
        </button>
      ) : null}
    </div>
  );
}

function FileTabs() {
  return (
    <div className="flex h-[22px] items-end bg-[#383838] pl-[15px]">
      <FileTab label="Start" closable={false} className="w-[126px] pl-4" />
      <FileTab label="ParaDrawing Practice*" active className="-ml-2 w-[157px] pr-3.5 pl-[15px]" />
      <FileTab label="Kashani--REV06*" className="-ml-2.5 w-[131px] pr-3.5 pl-4" />
      <button type="button" aria-label="New tab" className="mb-0.5 ml-1.5 flex h-3.5 w-5 items-center justify-center rounded-tl-sm rounded-br-md rounded-bl-lg bg-[#555555]">
        <svg viewBox="0 0 8 8" className="h-2 w-2" stroke="#b5b5b5" strokeWidth="2" aria-hidden="true">
          <path d="M4 0v8M0 4h8" />
        </svg>
      </button>
    </div>
  );
}

const bar = "flex items-center border border-[#3e3e3e] bg-[#575757]";

function Toolbars() {
  return (
    <div className="flex flex-col gap-0.5 border-b-2 border-[#474747] bg-[#5c5c5c] pt-[3px] pb-px">
      <div className="flex">
        <div className={`${bar} text-[#8f8f8f]`}>
          <Grip />
          {["new", "open", "save"].map((n) => <Tool key={n} name={n} />)}
          <Sep />
          {["print", "preview", "publish", "print3d"].map((n) => <Tool key={n} name={n} />)}
          <Sep />
          {["cut", "copy", "paste", "match", "blockedit"].map((n) => <Tool key={n} name={n} />)}
          <Sep />
          <Tool name="undo" />
          <Caret />
          <Tool name="redo" />
          <Caret />
          <Sep />
          {["pan", "zoom", "zoomwin", "zoomprev"].map((n) => <Tool key={n} name={n} />)}
          <Sep />
          {["props", "dc", "palettes", "sheets", "markup", "calc"].map((n) => <Tool key={n} name={n} />)}
          <Sep />
          <Tool name="help" />
        </div>
        <div className={bar}>
          <Grip />
          <Tool name="textstyle" />
          <Combo label="Text style" value="Standard" className="w-[114px] pl-4" />
          <Sep />
          <Tool name="dimstyle" />
          <Combo label="Dimension style" value="12" className="w-[114px] pl-4" />
          <Sep />
          <Tool name="tablestyle" />
          <Combo label="Table style" value="Standard" className="w-[114px] pl-1" />
          <Sep />
          <Tool name="mlstyle" className="h-5 w-6" />
          <Combo label="Multileader style" value="Standard" className="w-[112px] pl-4" />
        </div>
      </div>
      <div className="flex">
        <div className={bar}>
          <Grip />
          <Combo label="Color" value="ByLayer" className="w-[144px] pl-[18px]">
            <span className="pointer-events-none absolute top-[5px] left-1.5 h-2.5 w-2.5 border border-black bg-[#00ffff]" />
          </Combo>
          <Sep />
          <Combo label="Linetype" value="ByLayer" className="w-[152px] pl-16">
            <span className="pointer-events-none absolute top-2.5 left-1 h-px w-[57px] bg-[#222222]" />
          </Combo>
          <Sep />
          <Combo label="Lineweight" value="ByLayer" className="w-[120px] pl-10">
            <span className="pointer-events-none absolute top-2.5 left-1 h-px w-[34px] bg-[#222222]" />
          </Combo>
          <Sep />
          <Combo label="Plot style" value="ByColor" disabled className="w-[112px] pl-2" />
        </div>
        <div className={bar}>
          <Grip />
          <Tool name="layers" />
          <Combo label="Layer" value="Columns" className="w-[283px] pl-20">
            <span className="pointer-events-none absolute top-0.5 left-0.5 flex items-center gap-px">
              {["bulb", "sun", "vpfreeze", "unlock"].map((n) => (
                <Icon key={n} name={n} className="h-[15px] w-[15px]" />
              ))}
              <span className="ml-0.5 h-2.5 w-2.5 border border-black bg-[#00ffff]" />
            </span>
          </Combo>
          {["layCur", "layPrev", "layState"].map((n) => <Tool key={n} name={n} />)}
        </div>
        <div className={bar}>
          <Grip />
          {["layMatch", "layCheck", "layIn", "layOut", "layIso", "layWalk"].map((n) => <Tool key={n} name={n} />)}
          <Sep />
          {["layFrz", "layOff", "layLock", "layUnlock"].map((n) => <Tool key={n} name={n} />)}
        </div>
      </div>
    </div>
  );
}

const DRAW = ["line", "xline", "pline", "polygon", "rect", "arc", "circle", "cloud", "spline", "ellipse", "ellarc", "insert", "block", "point", "hatch", "hatch", "region", "table", "mtext", "addsel"];
const MODIFY = ["erase", "copyobj", "mirror", "offset", "array", "move", "rotate", "scale", "stretch", "trim", "extend", "breakpt", "breakobj", "join", "chamfer", "fillet", "blend", "explode"];
const REFEDIT = ["refedit", "-", "refadd", "refrem", "refclose", "refsave"];
const DIMENSION = ["dlin", "dali", "darc", "dord", "-", "drad", "djog", "ddia", "dang", "-", "dquick", "dbase", "dcont", "dspace", "dbreak", "-", "dtol", "dcenter", "dinsp", "djogl", "-", "dedit", "dtedit", "dupd", "-", "dstyle"];

function SideBar({ items, className }: { items: string[]; className: string }) {
  return (
    <div className={`flex w-6 flex-col border border-[#3b3b3b] bg-[#575757] ${className}`}>
      <VGrip />
      {items.map((n, i) =>
        n === "-" ? (
          <div key={i} className="flex h-[5px] shrink-0 items-center justify-center">
            <div className="h-0.5 w-[18px] bg-[#c4c4c4]" />
          </div>
        ) : (
          <Tool key={i} name={n} className="min-h-0 flex-1" />
        )
      )}
    </div>
  );
}

// Small deterministic generator, so the dense linework is the same on each render
function specks(seed: number, n: number, x: number, y: number, w: number, h: number, colors: string[], max = 3) {
  let s = seed * 7919 + 17;
  const next = () => {
    s = (s * 1103515245 + 12345) % 2147483648;
    return s / 2147483648;
  };
  return Array.from({ length: n }, (_, i) => {
    const rw = 1 + Math.floor(next() * max);
    const rh = 1 + Math.floor(next() * max);
    return (
      <rect
        key={i}
        x={x + Math.floor(next() * (w - rw))}
        y={y + Math.floor(next() * (h - rh))}
        width={rw}
        height={rh}
        fill={colors[Math.floor(next() * colors.length)]}
      />
    );
  });
}

function Sheet({ x, y, w, h }: { x: number; y: number; w: number; h: number }) {
  return (
    <g fill="none">
      <rect x={x + 1.5} y={y + 1.5} width={w - 3} height={h - 3} stroke="#8a5a40" strokeWidth="4" />
      <rect x={x} y={y} width={w} height={h} stroke="#a9603a" strokeWidth="1.400" />
      <rect x={x + 2} y={y + 2} width={w - 4} height={h - 4} stroke="#e4dfdc" strokeWidth="1.600" />
    </g>
  );
}

const RED = "#e0100c";

function Plan({ x, kind }: { x: number; kind: number }) {
  return (
    <g>
      <Sheet x={x} y={283} w={60} h={80} />
      <rect x={x + 13} y={288} width={3} height={71} fill={RED} />
      <rect x={x + 13} y={288} width={32} height={3} fill={RED} />
      <rect x={x + 33} y={333} width={12} height={26} fill="#b9140f" />
      <rect x={x + 16} y={334} width={17} height={13} fill="#118a14" />
      {kind === 0 ? (
        <g>
          <rect x={x + 16} y={291} width={28} height={42} fill="#93908d" />
          <path d={`M${x + 18} 294l24 24M${x + 28} 292l15 15M${x + 17} 306l18 18`} stroke="#a9a6a2" strokeWidth=".8" />
          <path d={`M${x + 17} 328l14-16M${x + 19} 331l14-12M${x + 27} 326l16-12`} stroke="#c0211c" strokeWidth="1.500" />
          <rect x={x + 37} y={315} width={7} height={14} fill="#5c7a34" stroke="#c9a34f" strokeWidth=".6" />
          {specks(71, 16, x + 16, 291, 28, 40, ["#e6d53a", "#c9b83a", "#b5221c"])}
        </g>
      ) : null}
      {kind === 1 ? (
        <g>
          <rect x={x + 16} y={291} width={28} height={42} fill="#3c6d78" />
          {specks(21, 210, x + 16, 291, 28, 42, ["#4fc6c6", "#b9c9c9", "#1f2a52", "#1c9a35", "#d5d23a", "#a6201c", "#212830", "#212830"], 4)}
        </g>
      ) : null}
      {kind === 2 ? (
        <g>
          <rect x={x + 16} y={291} width={18} height={9} fill="#4a5384" />
          <rect x={x + 16} y={324} width={11} height={9} fill="#4a5384" />
          <path d={`M${x + 16} 302h17M${x + 16} 310h17M${x + 16} 322h18`} stroke="#8a8f95" />
          <path d={`M${x + 35} 291v42M${x + 42} 291v40`} stroke="#d8d8d8" strokeWidth="1.500" />
          {specks(5, 70, x + 34, 290, 11, 44, [RED, "#e6d53a", "#d8d8d8", "#1c9a35"])}
          {specks(75, 20, x + 16, 290, 18, 10, [RED, "#6d76a8", "#7f1c2a"])}
        </g>
      ) : null}
      {kind === 3 ? (
        <g>
          <rect x={x + 16} y={291} width={12} height={13} fill="#3e466f" />
          <rect x={x + 16} y={306} width={10} height={9} fill="#4a5384" />
          <rect x={x + 24} y={324} width={20} height={9} fill="#4a5384" />
          <rect x={x + 15} y={324} width={8} height={10} fill="#118a14" />
          <path d={`M${x + 16} 304h28M${x + 16} 315h28M${x + 16} 323h28M${x + 28} 291v32M${x + 36} 291v32`} stroke="#a8261f" />
          <path d={`M${x + 44.5} 289v69`} stroke={RED} />
          {specks(8, 60, x + 34, 290, 11, 28, [RED, "#e6d53a", "#1c9a35", "#212830"])}
          {specks(78, 16, x + 16, 291, 18, 38, [RED, "#6d76a8", "#a8adb5"], 2)}
        </g>
      ) : null}
      {specks(kind + 31, 55, x + 33, 332, 13, 27, [RED, "#e6d53a", "#c99062", "#751310"])}
      {specks(kind + 61, 40, x + 13, 288, 33, 5, [RED, "#f2280f", "#8c1512", "#e6d53a"])}
      {specks(kind + 41, 26, x + 12, 288, 6, 71, [RED, "#e6d53a", "#751310"])}
      {specks(kind + 51, 14, x + 17, 334, 15, 12, ["#239a1e", "#0c5a10", "#c6b53a"])}
      <rect x={x + 16} y={348} width={17} height={9} fill="#212830" stroke={RED} />
      {specks(kind + 81, 14, x + 15, 352, 18, 7, [RED, "#9aa0a6", "#e6d53a"])}
      <path d={`M${x + 9} 291v2M${x + 9} 303v2M${x + 9} 314v2M${x + 9} 330v4`} stroke="#dedede" strokeWidth="2" />
      <path d={`M${x + 4} 358h11`} stroke="#dedede" strokeWidth="2" />
      <circle cx={x + 54} cy={290} r={2} fill="#b5120e" />
      <rect x={x + 50} y={358} width={8} height={3} fill="#f0a31c" stroke={RED} strokeWidth=".7" />
    </g>
  );
}

function ModelDrawing() {
  return (
    <svg viewBox="410 250 485 225" className="absolute top-[132px] left-[355px] h-[225px] w-[485px]" role="img" aria-label="Building plans">
      <path d="M415.500 258.500h473" stroke="#7a1a20" />
      <path d="M415.500 258v136.500h473V258" fill="none" stroke="#d4121a" />

      {/* Section */}
      <Sheet x={449} y={275} w={107} h={65} />
      <path d="M484.500 287v44" stroke="#d9a08c" />
      <path d="M485 287.500h49" stroke={RED} />
      <path d="M486 289.500h46M486 296.500h46M486 302.500h46M486 309.500h46M486 316.500h46M486 323.500h46M486 329.500h46" stroke="#0ed41a" strokeWidth="1.500" />
      <path d="M486.500 288v43M497.500 290v32M501.500 290v32M505.500 290v40M531.500 288v43" stroke="#0ec41a" />
      {specks(3, 70, 503, 291, 9, 39, ["#9ab9a6", "#0ed41a", "#4a7890", "#2b5a44"])}
      {specks(4, 90, 507, 283, 10, 47, [RED, "#f0d81c", "#e8671a"])}
      {specks(9, 70, 521, 288, 12, 42, ["#8fa3c4", "#0ed41a", "#f0d81c", "#c9d6cf", "#35506e"])}
      {[284, 288, 295, 301, 308, 314, 322, 326, 330].map((y) => (
        <g key={y}>
          <rect x={535} y={y} width={4} height={2} fill={RED} />
          <rect x={536} y={y} width={2} height={1} fill="#f0d81c" />
        </g>
      ))}
      <path d="M459 321h26" stroke={RED} strokeWidth="2" />
      <path d="M456 328.500h84" stroke="#1fb428" />
      {specks(7, 40, 456, 325, 82, 6, [RED, "#f0d81c", "#c7b199", "#0ed41a"])}
      <path d="M541 334.500h10" stroke="#dedede" />

      {/* Elevation */}
      <Sheet x={562} y={283} w={42} h={57} />
      <path d="M566 289h10v3h24M567 332h33" fill="none" stroke={RED} strokeWidth="1.500" />
      {[0, 1, 2, 3, 4].map((r) => (
        <g key={r}>
          <rect x={571} y={295 + r * 7} width={7} height={5} fill="#e0a07c" />
          <rect x={580} y={295 + r * 7} width={5} height={5} fill="#52774a" />
          <rect x={589} y={295 + r * 7} width={5} height={5} fill="#3f7c6a" />
          <path d={`M568 ${301 + r * 7}h30`} stroke="#9c9a96" strokeWidth=".6" />
        </g>
      ))}
      <path d="M597.500 288v42" stroke="#a9a9a9" />
      <rect x={571} y={329} width={7} height={4} fill="#1c9c9c" />
      <rect x={590} y={326} width={3} height={7} fill="#1c9c9c" />
      {specks(11, 30, 566, 287, 5, 47, [RED, "#f0d81c", "#e8671a"])}
      {specks(12, 36, 578, 294, 18, 38, ["#d7e34a", "#67b04d", "#27353b"], 2)}

      <Plan x={609} kind={0} />
      <Plan x={673} kind={1} />
      <Plan x={737} kind={2} />
      <Plan x={802} kind={3} />

      <text x={660} y={383} textAnchor="middle" direction="rtl" fontSize="8" fontWeight="700" fill="#00f010" stroke="#00f010" strokeWidth=".4" fontFamily="DejaVu Sans, sans-serif">
        پلان های معماری
      </text>
      <path d="M628 385.500h12" stroke="#c9cc10" />
      <path d="M640 387h51" stroke="#f4f414" strokeWidth="2" />

      {/* Column grid */}
      <path d="M422 430.500h31M422 440.500h31M422 448.500h31M422 458.500h31M431.500 417v47M440.500 417v47M444.500 417v47" stroke="#77797d" />
      <path d="M422.500 416v46M449.500 416v46" stroke="#e2e2e2" />
      {specks(13, 50, 420, 413, 32, 4, [RED, "#f0501c", "#f0d81c"])}
      {specks(14, 50, 417, 415, 4, 48, [RED, "#f0d81c", "#8c1512"])}
      <path d="M422 418.500h4M428 418.500h4M446 418.500h4M422 431.500h4M438 431.500h3M446 429.500h4M422 440.500h3M446 440.500h4M422 448.500h4M437 448.500h3M422 458.500h4M432 458.500h3M446 459.500h4M449.500 418v5" stroke="#e9e01c" strokeWidth="1.500" />
      <path d="M422 467.500h29" stroke="#12e418" strokeWidth="3" />
      <path d="M422 469.500h29" stroke="#a8cf18" />

      {/* Stair detail */}
      <rect x={475} y={418} width={10} height={14} fill="none" stroke="#e9d41c" strokeWidth="2" />
      <path d="M474 415v19" stroke={RED} strokeWidth="2" />
      <path d="M477.500 420v11M482.500 420v11" stroke={RED} />
      <path d="M485 418.500h5M485 430.500h5" stroke="#b8d02a" />
      {specks(16, 16, 483, 415, 7, 18, ["#2bbf2e", RED, "#f0d81c"], 2)}
      <path d="m472 436 5-2v4zM477 436h5" stroke="#14d62a" fill="#14d62a" />
      <path d="M482 435.500h7" stroke="#20b8c4" strokeWidth="2" />
      <ellipse cx={509} cy={424} rx={4.500} ry={7} fill="#17606e" stroke="#27c8d4" />
      {specks(17, 34, 504, 417, 10, 14, ["#2fd8e0", "#e6e23a", "#1c4d66"], 2)}
    </svg>
  );
}

function ViewCube() {
  return (
    <svg viewBox="1130 118 118 110" className="absolute top-0 right-0 h-[110px] w-[118px]" fontFamily="Liberation Sans, sans-serif" role="img" aria-label="View cube, top">
      <circle cx={1187} cy={176} r={40} fill="none" stroke="#4c535b" strokeWidth="7" />
      <g fill="#212830">
        <circle cx={1187} cy={137} r={7} />
        <circle cx={1187} cy={215} r={7} />
        <circle cx={1147} cy={176} r={8} />
        <circle cx={1227} cy={176} r={7} />
      </g>
      <g fill="#d9dadb" fontSize="15" fontWeight="700" textAnchor="middle">
        <text x={1187} y={143}>N</text>
        <text x={1187} y={220}>S</text>
        <text x={1146} y={181}>W</text>
        <text x={1228} y={181}>E</text>
      </g>
      <path d="M1182.500 148.500h9l-4.500 4.500zM1182.500 202.500h9l-4.500-4.500zM1158.500 171v9l4.500-4.500zM1216 171v9l-4.500-4.500z" fill="#eeeeee" />
      <rect x={1168.500} y={158.500} width={37} height={34} fill="#dedddb" stroke="#bdbdbb" />
      <rect x={1175} y={163.500} width={25} height={24} fill="#acd0ef" stroke="#3a7ec6" strokeWidth="1.500" />
      <text x={1187.500} y={179} fontSize="9" fontWeight="700" textAnchor="middle" fill="#28303a">TOP</text>
      <path d="m1136 130 4.500-5 4.500 5v4h-3v-3h-3v3h-3z" fill="#6d7379" />
      <path d="m1216 127 7-4v2l9 3 0 3-9-2v2zM1235 134l2-1c3 3 4 5 4 8l2 0-4 7-3-7 2 0c0-3-1-4-3-7z" fill="#6d7379" />
      <path d="M1231.500 216.500h8M1232 219h7l-3.500 3.500z" fill="#8f9398" stroke="#8f9398" />
    </svg>
  );
}

function NavBar() {
  return (
    <div className="absolute top-[155px] right-[3px] h-[190px] w-[30px] rounded border border-[#6d737b] bg-[#5b616a]">
      <svg viewBox="0 0 28 188" className="h-full w-full" fill="none" stroke="#474c54" strokeWidth="1.200" role="img" aria-label="Navigation bar">
        <circle cx="23" cy="5" r="3" />
        <path d="m21.500 3.500 3 3M24.500 3.500l-3 3" strokeWidth=".8" />
        <path d="M23 27v9h-9a9.500 9.500 0 1 1 9-9z" />
        <circle cx="14" cy="27" r="6.500" />
        <circle cx="14" cy="27" r="3.500" />
        <path d="M12.500 44h3l-1.500 1.500z" />
        <path d="M9 74c-2-5-6-8-4-9s4 3 5 3l-2-11c1-2 2-1 3 1l1 5V54c1-2 2-1 3 0v9l2-8c2-1 2 0 2 2l-1 8 2-3c2-2 3 0 2 2l-4 10z" />
        <path d="m5 80 7 7M19 80l-7 7m0 0-7 8M5 84v-4h4M15 80h4v4M5 91v4h4" strokeWidth="1.500" />
        <circle cx="18" cy="92" r="4" />
        <path d="m21 95 4 4" strokeWidth="2" />
        <path d="M12.500 105h3l-1.500 1.500z" />
        <path d="M12 132v-12h-3l5-7 5 7h-3v12z" />
        <path d="M4 123c0-5 20-5 20 0 0 4-20 4-20 0M8 121l-4 3 4 3" />
        <path d="M12.500 140h3l-1.500 1.500z" />
        <path d="M4 151h5v5H4zM12 151h5v5h-5zM19 151h5v5h-5zM4 158.500h13v11H4z" />
        <path d="m8 161 6 3-6 3z" fill="#474c54" />
        <circle cx="23" cy="183" r="3" />
        <path d="M21 183h4" />
      </svg>
    </div>
  );
}

function CommandLine() {
  return (
    <div className="absolute bottom-0 left-[394px] flex h-6 w-[404px] items-center border border-[#6d6f72] bg-[#bcbdbf]">
      <div className="flex h-full w-[51px] items-center bg-linear-to-b from-[#6a6a6a] to-[#454545] pl-0.5">
        <svg viewBox="0 0 5 16" className="h-4 w-[5px]" fill="none" stroke="#aaaaaa" strokeDasharray="1 1" aria-hidden="true">
          <path d="M.5 0v16M2.500 0v16M4.500 0v16" />
        </svg>
        <button type="button" aria-label="Close command line" className="ml-1.5">
          <svg viewBox="0 0 9 9" className="h-[9px] w-[9px]" stroke="#cccccc" strokeWidth="1.600" aria-hidden="true">
            <path d="m1 1 7 7M8 1 1 8" />
          </svg>
        </button>
        <button type="button" aria-label="Customize command line" className="ml-2.5">
          <svg viewBox="0 0 14 14" className="h-3.5 w-3.5" fill="none" stroke="#c6c6c6" aria-hidden="true">
            <path d="m6 6 7 7" strokeWidth="2.500" />
            <path d="M2 2v3l2 1.500 3-2.500L5.500 1.500" strokeWidth="2" />
          </svg>
        </button>
      </div>
      <svg viewBox="0 0 24 12" className="ml-1 h-3 w-6" fill="none" aria-hidden="true">
        <rect x=".5" y=".5" width="14" height="11" fill="#9da8b8" stroke="#6d7888" />
        <path d="m3 3 3 3-3 3M7.500 9.500h4" stroke="#2c3644" strokeWidth="1.300" />
        <path d="M18 4h5l-2.500 3z" fill="#6a6a6a" />
      </svg>
      <input
        aria-label="Command"
        placeholder="Type a command"
        className="min-w-0 flex-1 bg-transparent px-1.5 font-['Liberation_Mono',monospace] text-sm leading-4 italic outline-none placeholder:text-[#7b7c7e]"
      />
      <button type="button" aria-label="Command history" className="mr-1">
        <svg viewBox="0 0 7 4" className="h-1 w-[7px]" aria-hidden="true">
          <path d="M0 4h7L3.500 0z" fill="#1d1d1d" />
        </svg>
      </button>
    </div>
  );
}

function Canvas() {
  return (
    <main className="relative min-w-0 flex-1 overflow-hidden bg-[#212830]">
      <p className="px-[3px] pt-[5px] text-[11px] leading-4 text-[#e8e8e8]">[−][Top][2D Wireframe]</p>
      <ModelDrawing />
      <ViewCube />
      <button
        type="button"
        className="absolute top-[118px] right-[38px] flex h-[15px] w-[46px] items-center justify-between rounded border border-[#8d8f9a] bg-[#b9bac3] px-1 font-['Liberation_Sans',sans-serif] text-[10px] leading-3 text-[#4e5058]"
      >
        WCS
        <svg viewBox="0 0 9 4" className="h-1 w-[9px]" fill="#dcdde4" stroke="#9d9faa" aria-hidden="true">
          <path d="M.5.5h8l-1 3h-6z" />
        </svg>
      </button>
      <NavBar />
      <svg viewBox="60 530 80 72" className="absolute bottom-[7px] left-[5px] h-[72px] w-20" fill="none" stroke="#d3d6d9" role="img" aria-label="UCS icon">
        <path d="M69.500 550v45.500H117" />
        <path d="M65.500 590.500h9v8h-9z" />
        <path d="m71 534 6 6 6-6M77 540v6M121 582l13 11M134 582l-13 11" />
      </svg>
      <CommandLine />
    </main>
  );
}

function LayoutTab({ label, active = false, className }: { label: string; active?: boolean; className: string }) {
  return (
    <button type="button" className={`relative h-4 text-[11px] leading-4 ${active ? "z-10 font-bold text-white" : "text-[#bdbdbd]"} ${className}`}>
      <svg viewBox="0 0 70 16" preserveAspectRatio="none" className="absolute inset-0 h-full w-full" aria-hidden="true">
        <path d="M0 0c5 1 5 4 7 9 1 5 3 7 7 7h42c4 0 6-2 7-7 2-5 2-8 7-9z" fill={active ? "#757575" : "#585858"} />
      </svg>
      <span className="relative">{label}</span>
    </button>
  );
}

function Group({ children }: { children: ReactNode }) {
  return <div className="flex h-[22px] items-center border border-[#6c6c6c] bg-[#474747] text-[#e8e8e8]">{children}</div>;
}

function StatusBar() {
  const cell = "h-5 w-[23px]";
  return (
    <footer className="flex h-[23px] items-start bg-[#383838] pl-3">
      <LayoutTab label="Model" active className="w-14" />
      <LayoutTab label="Layout1" className="-ml-1 w-[66px]" />
      <LayoutTab label="Layout2" className="-ml-1 w-[66px]" />
      <button type="button" aria-label="New layout" className="flex h-4 w-6 items-center justify-center rounded-b-lg bg-[#505050]">
        <svg viewBox="0 0 8 8" className="h-2 w-2" stroke="#cccccc" strokeWidth="1.800" aria-hidden="true">
          <path d="M4 0v8M0 4h8" />
        </svg>
      </button>
      <div className="ml-auto flex gap-px pt-px pr-0.5">
        <Group>
          <button type="button" className="w-11 text-center text-[11px] font-semibold">
            MODEL
          </button>
        </Group>
        <Group>
          <Tool name="grid" className={cell} />
          <Tool name="snap" className={cell} />
          <Caret className="w-3.5" />
        </Group>
        <Group>
          <Tool name="ortho" className={cell} />
          <Tool name="polar" className={cell} />
          <Caret className="w-3.5" />
          <Tool name="iso" className={cell} />
          <Caret />
        </Group>
        <Group>
          <Tool name="otrack" className={cell} />
          <Tool name="osnap" className={cell} />
          <Caret className="w-3.5" />
        </Group>
        <Group>
          <Tool name="lwt" className="h-5 w-5" />
        </Group>
        <Group>
          <Tool name="annoOn" className={cell} />
          <Tool name="annoAuto" className={cell} />
          <Tool name="anno" className={cell} />
          <button type="button" className="pl-1 text-[10px] font-semibold">
            1:1
          </button>
          <Caret />
        </Group>
        <Group>
          <Tool name="gear" className={cell} />
          <Caret className="w-3.5" />
        </Group>
        <Group>
          <Tool name="plus" />
        </Group>
        <Group>
          <Tool name="isolate" />
        </Group>
        <Group>
          <Tool name="hw" className={cell} />
        </Group>
        <Group>
          <Tool name="trust" className="h-5 w-[19px]" />
          <Tool name="plotter" className="h-5 w-[19px]" />
        </Group>
        <Group>
          <Tool name="clean" className={cell} />
          <Tool name="menu" className={cell} />
        </Group>
      </div>
    </footer>
  );
}

export default function App() {
  return (
    <div className="flex min-h-screen flex-col overflow-hidden bg-[#5c5c5c] font-['Open_Sans','Noto_Sans',sans-serif]">
      <TitleBar />
      <FileTabs />
      <Toolbars />
      <div className="flex flex-1">
        <aside className="flex w-[55px] shrink-0 items-start gap-[3px] pl-px">
          <SideBar items={DRAW} className="h-[401px]" />
          <div className="flex flex-col gap-px">
            <SideBar items={MODIFY} className="h-[360px]" />
            <SideBar items={REFEDIT} className="h-[112px]" />
          </div>
        </aside>
        <Canvas />
        <aside className="flex w-8 shrink-0 justify-center">
          <SideBar items={DIMENSION} className="h-[445px]" />
        </aside>
      </div>
      <StatusBar />
    </div>
  );
}
